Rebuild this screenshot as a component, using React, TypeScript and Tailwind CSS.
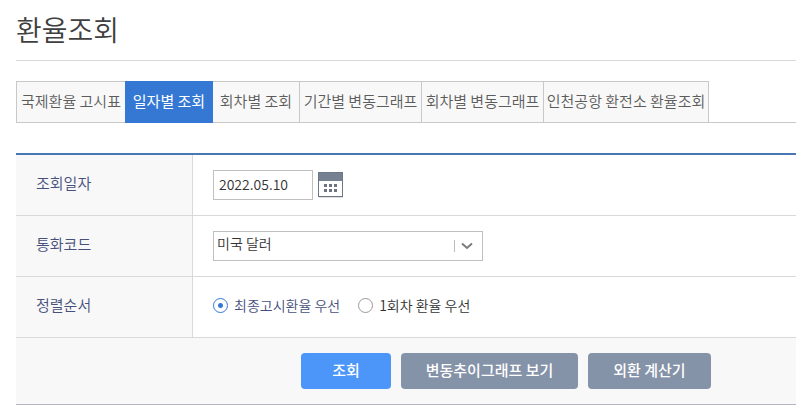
import React, { useState } from 'react';

const tabs = [
  { label: '국제환율 고시표', width: 'w-[109px]' },
  { label: '일자별 조회', width: 'w-[88px]' },
  { label: '회차별 조회', width: 'w-[87px]' },
  { label: '기간별 변동그래프', width: 'w-[122px]' },
  { label: '회차별 변동그래프', width: 'w-[122px]' },
  { label: '인천공항 환전소 환율조회', width: 'w-[165px]' },
];

const CalendarIcon: React.FC = () => (
  <svg width="26" height="27" viewBox="0 0 26 27" aria-hidden="true">
    <rect x="1" y="25" width="24" height="1" fill="#dcdcdc" />
    <rect x="0.5" y="0.5" width="24" height="24" fill="#fff" stroke="#6d7887" />
    <rect x="1" y="1" width="23" height="8" fill="#758191" />
    {[12, 17].map((y) =>
      [6, 11, 16].map((x) => (
        <rect key={`${x}-${y}`} x={x} y={y} width="3" height="3" fill="#6d7480" />
      ))
    )}
  </svg>
);

const App: React.FC = () => {
  const [activeTab, setActiveTab] = useState(1);
  const [date, setDate] = useState('2022.05.10');
  const [order, setOrder] = useState('last');

  const headCell = 'bg-[#f8f8f8] border-r border-[#d9d9d9] w-[177px] pl-5 pb-1 text-left text-[15px] font-[350] text-[#46507c]';
  const radio =
    'appearance-none size-[15px] rounded-full border border-[#999] bg-white checked:border-[#3478d4] checked:bg-[radial-gradient(circle,#3478d4_2px,#fff_3px)]';

  return (
    <main className="pl-4 bg-white font-['Noto_Sans_CJK_KR',sans-serif] font-[350] text-[#333]">
      <h1 className="h-[61px] pt-2 border-b border-[#d9d9d9] text-[28px] leading-[42px] font-[350] text-[#404040]">
        환율조회
      </h1>

      <nav className="mt-5 flex border-b border-[#c8c8c8]">
        {tabs.map((tab, i) => (
          <button
            key={tab.label}
            type="button"
            onClick={() => setActiveTab(i)}
            className={`${tab.width} h-[42px] -mb-px shrink-0 pb-0.5 border whitespace-nowrap text-[15px] text-center cursor-pointer ${
              i === activeTab
                ? 'bg-[#3478d4] border-[#3478d4] text-white font-normal'
                : 'bg-[#f8f8f8] border-[#c8c8c8] text-[#5c5c5c]'
            } ${i === 0 || i === activeTab ? '' : 'border-l-0'} ${i + 1 === activeTab ? 'border-r-0' : ''}`}
          >
            {tab.label}
          </button>
        ))}
      </nav>

      <form className="mt-[30px] border-t-2 border-[#4a76b4]" onSubmit={(e) => e.preventDefault()}>
        <table className="w-full border-separate border-spacing-0">
          <tbody>
            <tr className="h-[61px]">
              <th scope="row" className={`${headCell} border-b`}>
                <label htmlFor="date">조회일자</label>
              </th>
              <td className="pl-5 border-b border-[#d9d9d9]">
                <div className="flex items-center gap-[5px]">
                  <input
                    id="date"
                    type="text"
                    value={date}
                    onChange={(e) => setDate(e.target.value)}
                    className="w-[100px] h-[30px] px-[5px] pb-0.5 border border-[#c0c0c0] bg-white text-sm"
                  />
                  <button type="button" aria-label="달력" className="cursor-pointer">
                    <CalendarIcon />
                  </button>
                </div>
              </td>
            </tr>
            <tr className="h-[61px]">
              <th scope="row" className={`${headCell} border-b`}>
                <label htmlFor="currency">통화코드</label>
              </th>
              <td className="pl-5 border-b border-[#d9d9d9]">
                <div className="relative w-[270px]">
                  <select
                    id="currency"
                    className="block appearance-none w-full h-[30px] pl-[3px] pb-1.5 border border-[#c0c0c0] bg-white text-sm"
                  >
                    <option>미국 달러</option>
                  </select>
                  <svg
                    className="absolute right-2 top-2 pointer-events-none"
                    width="22"
                    height="14"
                    viewBox="0 0 22 14"
                    fill="none"
                    aria-hidden="true"
                  >
                    <path d="M1.5 1v12" stroke="#bbb" />
                    <path d="M9 4.5l5 4.500L19 4.500" stroke="#7c7c7c" strokeWidth="2" />
                  </svg>
                </div>
              </td>
            </tr>
            <tr className="h-[61px]">
              <th scope="row" className={`${headCell} border-b`}>정렬순서</th>
              <td className="pl-5 pb-1 border-b border-[#d9d9d9]">
                <div className="flex items-center gap-[18px] text-sm">
                  <label className={`flex items-center gap-1.5 ${order === 'last' ? 'text-[#46507c]' : ''}`}>
                    <input type="radio" name="order" checked={order === 'last'} onChange={() => setOrder('last')} className={radio} />
                    최종고시환율 우선
                  </label>
                  <label className={`flex items-center gap-1.5 ${order === 'first' ? 'text-[#46507c]' : ''}`}>
                    <input type="radio" name="order" checked={order === 'first'} onChange={() => setOrder('first')} className={radio} />
                    1회차 환율 우선
                  </label>
                </div>
              </td>
            </tr>
          </tbody>
        </table>

        <div className="flex justify-center gap-2.5 h-[67px] pt-[15px] pl-[200px] bg-[#f8f8f8] border-b border-[#b4b6c4] text-[15px] font-medium text-white">
          <button type="submit" className="w-[90px] h-9 pb-0.5 rounded bg-[#4b96f8] cursor-pointer">
            조회
          </button>
          <button type="button" className="w-[177px] h-9 pb-0.5 rounded bg-[#8593a8] cursor-pointer">
            변동추이그래프 보기
          </button>
          <button type="button" className="w-[123px] h-9 pb-0.5 rounded bg-[#8593a8] cursor-pointer">
            외환 계산기
          </button>
        </div>
      </form>
    </main>
  );
};

export default App;
